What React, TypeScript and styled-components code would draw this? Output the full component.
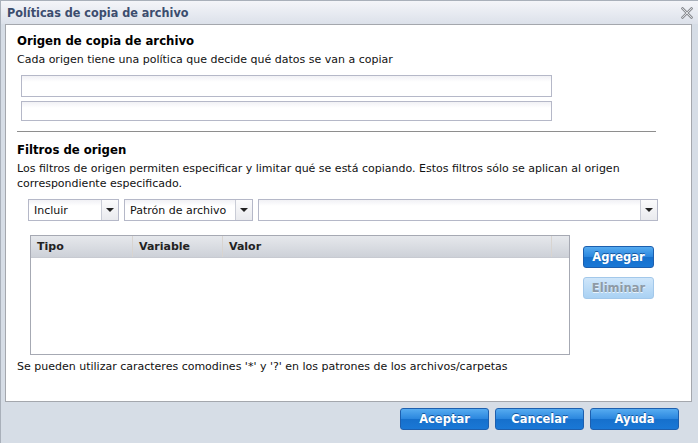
import React from 'react';
import styled, { createGlobalStyle } from 'styled-components';

const Global = createGlobalStyle`
    html, body {
        margin: 0;
        padding: 0;
        background: #ffffff;
    }
    * {
        box-sizing: border-box;
    }
`;

const font = '"DejaVu Sans", Verdana, sans-serif';
const headFont = '"DejaVu Sans Condensed", "DejaVu Sans", Verdana, sans-serif';

const Window = styled.div`
    width: 698px;
    height: 443px;
    display: flex;
    flex-direction: column;
    background: #d6dde6;
    border-left: 1px solid #a9b0ba;
    border-top: 1px solid #a9b0ba;
    font-family: ${font};
    font-size: 11px;
    color: #111;
`;

const TitleBar = styled.div`
    height: 23px;
    display: flex;
    align-items: center;
    justify-content: space-between;
    padding: 0 5px 0 6px;
    background: linear-gradient(#f4f5f9, #dce1ea);
`;

const Title = styled.span`
    font-family: ${headFont};
    font-weight: bold;
    font-size: 12.5px;
    color: #3c4d6e;
`;

const Close = styled.button`
    border: none;
    background: none;
    padding: 0;
    width: 12px;
    height: 12px;
    display: flex;
    cursor: pointer;
`;

const Panel = styled.div`
    flex: 1;
    margin: 0 6px 0 4px;
    background: #fff;
    border: 1px solid #a4a7ad;
    padding: 8px 11px 0 11px;
    display: flex;
    flex-direction: column;
`;

const Heading = styled.h2<{ $top?: number }>`
    margin: ${p => p.$top || 0}px 0 0 0;
    font-family: ${headFont};
    font-size: 13px;
    line-height: 16px;
    font-weight: bold;
    color: #000;
`;

const Text = styled.p<{ $top?: number }>`
    margin: ${p => p.$top || 0}px 0 0 0;
    font-size: 11px;
    line-height: 15px;
`;

const InputStack = styled.div`
    display: flex;
    flex-direction: column;
    gap: 4px;
    margin: 8px 0 0 4px;
    width: 531px;
`;

const Input = styled.input<{ $h: number }>`
    height: ${p => p.$h}px;
    width: 100%;
    border: 1px solid #b5b8c8;
    background: linear-gradient(#f1f1f5, #ffffff 6px);
    font-family: ${font};
    font-size: 11px;
    padding: 0 4px;
    outline: none;
`;

const Rule = styled.hr`
    margin: 10px 0 0 0;
    width: 639px;
    border: none;
    border-top: 1px solid #8e8e8e;
    height: 0;
`;

const ComboRow = styled.div`
    display: flex;
    gap: 5px;
    margin: 8px 0 0 11px;
`;

const Combo = styled.div<{ $w: number }>`
    width: ${p => p.$w}px;
    height: 22px;
    display: flex;
    border: 1px solid #b5b8c8;
    background: linear-gradient(#f1f1f5, #ffffff 6px);
`;

const ComboValue = styled.span`
    flex: 1;
    padding: 0 5px;
    display: flex;
    align-items: center;
    font-size: 11px;
    white-space: nowrap;
`;

const ComboArrow = styled.span`
    width: 17px;
    border-left: 1px solid #c9ccd6;
    background: linear-gradient(#fbfbfc, #e9eaee);
    display: flex;
    align-items: center;
    justify-content: center;
`;

const Triangle = styled.span`
    width: 0;
    height: 0;
    border-left: 4px solid transparent;
    border-right: 4px solid transparent;
    border-top: 4px solid #222;
`;

const TableArea = styled.div`
    display: flex;
    gap: 13px;
    margin: 14px 0 0 13px;
`;

const Grid = styled.div`
    width: 540px;
    height: 120px;
    border: 1px solid #a6a9b3;
    display: flex;
    flex-direction: column;
`;

const GridHead = styled.div`
    height: 22px;
    display: flex;
    background: linear-gradient(#e6e8ec, #cdd1d8);
    border-bottom: 1px solid #c7cad1;
`;

const HeadCell = styled.div<{ $w?: number }>`
    ${p => (p.$w ? `width: ${p.$w}px;` : 'flex: 1;')}
    display: flex;
    align-items: center;
    padding: 0 6px;
    font-weight: bold;
    font-size: 11px;
    color: #222;
    border-right: 1px solid #d8d4d0;
    &:last-child {
        border-right: none;
    }
`;

const SideButtons = styled.div`
    display: flex;
    flex-direction: column;
    gap: 9px;
    padding-top: 11px;
`;

const Btn = styled.button<{ $w: number; $disabled?: boolean }>`
    width: ${p => p.$w}px;
    height: 22px;
    border-radius: 3px;
    border: 1px solid ${p => (p.$disabled ? '#a3c8ea' : '#1d5fae')};
    background: ${p =>
        p.$disabled
            ? 'linear-gradient(#cfe6fa, #a9d1f3)'
            : 'linear-gradient(#56abf0 0%, #2a86de 50%, #1670cc 51%, #1a78d6 100%)'};
    color: ${p => (p.$disabled ? '#8e9aa6' : '#fff')};
    font-family: ${font};
    font-weight: bold;
    font-size: 11.5px;
    text-shadow: ${p => (p.$disabled ? '0 1px 0 #e8f3fc' : '0 -1px 0 #1658a0')};
    padding: 0;
    cursor: pointer;
`;

const Footer = styled.div`
    height: 41px;
    display: flex;
    justify-content: flex-end;
    align-items: flex-start;
    gap: 6px;
    padding: 6px 19px 0 0;
`;

const CloseIcon = () => (
    <svg width="12" height="12" viewBox="0 0 12 12">
        <path d="M1.5 1.5 L10.5 10.5 M10.5 1.5 L1.5 10.5" stroke="#8d8f94" strokeWidth="2.6" strokeLinecap="square" />
        <path d="M1.5 1.5 L10.5 10.5 M10.5 1.5 L1.5 10.5" stroke="#e4e6ea" strokeWidth="0.9" strokeLinecap="square" />
    </svg>
);

const ComboBox = ({ w, value }: { w: number; value: string }) => (
    <Combo $w={w}>
        <ComboValue>{value}</ComboValue>
        <ComboArrow>
            <Triangle />
        </ComboArrow>
    </Combo>
);

const App: React.FC = () => {
    return (
        <>
            <Global />
            <Window>
                <TitleBar>
                    <Title>Políticas de copia de archivo</Title>
                    <Close aria-label="Cerrar">
                        <CloseIcon />
                    </Close>
                </TitleBar>
                <Panel>
                    <Heading>Origen de copia de archivo</Heading>
                    <Text $top={3}>Cada origen tiene una política que decide qué datos se van a copiar</Text>
                    <InputStack>
                        <Input $h={22} />
                        <Input $h={20} />
                    </InputStack>
                    <Rule />
                    <Heading $top={10}>Filtros de origen</Heading>
                    <Text $top={3}>
                        Los filtros de origen permiten especificar y limitar qué se está copiando. Estos filtros sólo se aplican al origen
                        correspondiente especificado.
                    </Text>
                    <ComboRow>
                        <ComboBox w={91} value="Incluir" />
                        <ComboBox w={129} value="Patrón de archivo" />
                        <ComboBox w={400} value="" />
                    </ComboRow>
                    <TableArea>
                        <Grid>
                            <GridHead>
                                <HeadCell $w={102}>Tipo</HeadCell>
                                <HeadCell $w={90}>Variable</HeadCell>
                                <HeadCell>Valor</HeadCell>
                                <HeadCell $w={17} />
                            </GridHead>
                        </Grid>
                        <SideButtons>
                            <Btn $w={71}>Agregar</Btn>
                            <Btn $w={71} $disabled>Eliminar</Btn>
                        </SideButtons>
                    </TableArea>
                    <Text $top={4}>Se pueden utilizar caracteres comodines '*' y '?' en los patrones de los archivos/carpetas</Text>
                </Panel>
                <Footer>
                    <Btn $w={89}>Aceptar</Btn>
                    <Btn $w={89}>Cancelar</Btn>
                    <Btn $w={89}>Ayuda</Btn>
                </Footer>
            </Window>
        </>
    );
};

export default App;
